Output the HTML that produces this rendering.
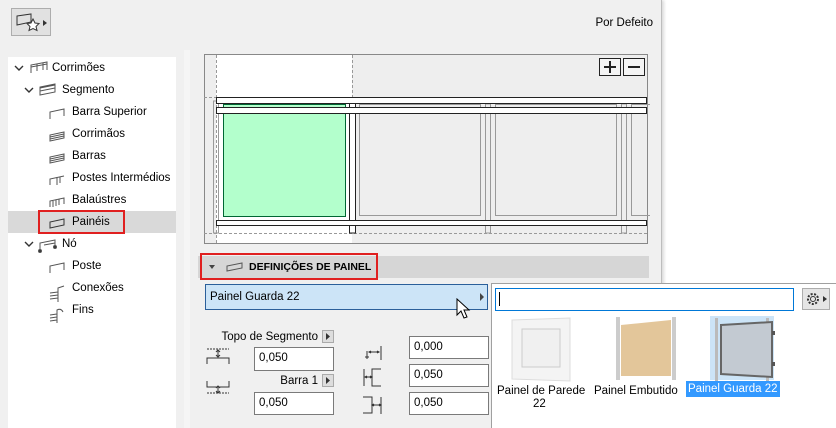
<!DOCTYPE html><html><head><style>
*{margin:0;padding:0;box-sizing:border-box}
body{width:836px;height:428px;position:relative;background:#fff;font-family:"Liberation Sans",sans-serif;font-size:11.5px;color:#000;overflow:hidden}
.a{position:absolute}
.t{position:absolute;white-space:nowrap;font-size:11.5px;line-height:14px}
.in{position:absolute;background:#fff;border:1px solid #7a7a7a;font-size:11.5px;padding:4px 0 0 4px}
</style></head><body>
<div class="a" style="left:0;top:0;width:662px;height:428px;background:#f0f0f0;border-right:1px solid #bdbdbd;box-shadow:2px 0 3px rgba(0,0,0,.15)"></div>
<div class="a" style="left:11px;top:8px;width:40px;height:28px;background:#e1e1e1;border:1px solid #adadad"></div>
<svg class="a" style="left:14px;top:12px" width="36" height="22"><path d="M3 4 L17 2 L17 10 L3 13 Z" fill="none" stroke="#333"/><path d="M19 7 l2 4 4 .5 -3 3 1 4 -4-2 -4 2 1-4 -3-3 4-.5z" fill="#fff" stroke="#333"/><path d="M29 8 l4 3 -4 3z" fill="#333"/></svg>
<div class="t" style="right:183px;top:16px">Por Defeito</div>
<div class="a" style="left:8px;top:57px;width:168px;height:371px;background:#fff"></div>
<div class="a" style="left:184px;top:50px;width:6px;height:378px;background:#f5f5f5"></div>
<div class="a" style="left:8px;top:211px;width:168px;height:22px;background:#d9d9d9"></div>
<div class="a" style="left:38px;top:210px;width:87px;height:24px;border:2px solid #e02020"></div>
<svg class="a" style="left:0;top:57px" width="176" height="270" fill="none" stroke="#555">
<path d="M15 9l4 4 4-4M25 31l4 4 4-4M25 185l4 4 4-4" stroke="#333" stroke-width="1.4"/>
<path d="M31 16v-8l16-3v8M31 10l16-3M37 14v-7M43 13v-7"/>
<path d="M40 38v-8l15-3v8zM40 31l15-3M40 34l15-3"/>
<path d="M50 62v-7l14-3v7"/>
<path d="M50 84v-6l14-3v6zM50 80l14-3M50 82l14-3"/>
<path d="M50 106v-6l14-3v6zM50 102l14-3M50 104l14-3"/>
<path d="M50 128v-6l14-3M57 128v-8M60 126v-6"/>
<path d="M50 150v-6l14-3v6M53 150v-6M56 149v-6M59 148v-6"/>
<path d="M50 171v-6l14-3v6z" stroke="#333"/>
<path d="M40 194v-8l15-3v8M44 188l11-2" /><circle cx="40" cy="194" r="1.5" fill="#333"/><circle cx="55" cy="190" r="1.5" fill="#333"/>
<path d="M50 216v-7l14-3v7"/>
<path d="M50 236l8-1M50 239l8-1M50 242l8-1M58 245v-14l6-2"/>
<path d="M50 258l7-1M50 261l7-1M50 264l7-1M57 266v-13q4-2 6 2"/>
</svg>
<div class="t" style="left:52px;top:61px">Corrimões</div>
<div class="t" style="left:62px;top:83px">Segmento</div>
<div class="t" style="left:72px;top:105px">Barra Superior</div>
<div class="t" style="left:72px;top:127px">Corrimãos</div>
<div class="t" style="left:72px;top:149px">Barras</div>
<div class="t" style="left:72px;top:171px">Postes Intermédios</div>
<div class="t" style="left:72px;top:193px">Balaústres</div>
<div class="t" style="left:72px;top:215px">Painéis</div>
<div class="t" style="left:62px;top:237px">Nó</div>
<div class="t" style="left:72px;top:259px">Poste</div>
<div class="t" style="left:72px;top:281px">Conexões</div>
<div class="t" style="left:72px;top:303px">Fins</div>
<svg class="a" style="left:204px;top:54px" width="446" height="192">
<rect x="0.5" y="0.5" width="443" height="189" fill="#eee" stroke="#888"/>
<rect x="12" y="1" width="136" height="188" fill="#fff"/>
<path d="M12.5 1v188M148.5 1v64M0 43.5h12M0 179.5h443" stroke="#999" stroke-dasharray="3 2"/>
<g fill="none" stroke="#999">
<rect x="155.5" y="50.5" width="121" height="111"/><rect x="291.5" y="50.5" width="121" height="111"/><rect x="427.5" y="50.5" width="20" height="111"/>
<rect x="9.5" y="47" width="5" height="132"/><rect x="281.5" y="50" width="5" height="129"/><rect x="417.5" y="50" width="5" height="129"/>
</g>
<rect x="19.5" y="50.5" width="122" height="112" fill="#b3ffcc" stroke="#063"/>
<rect x="145.5" y="49" width="6" height="130" fill="#fff" stroke="#222"/>
<g fill="#fff" stroke="#222"><rect x="12.5" y="43.5" width="430" height="6"/><rect x="12.5" y="53.5" width="430" height="6"/><rect x="12.5" y="166.5" width="430" height="5"/></g>
<g fill="#f4f4f4" stroke="#222"><rect x="395.5" y="4.5" width="21" height="17"/><rect x="419.5" y="4.5" width="21" height="17"/></g>
<path d="M400 13h12M406 7v12M424 13h12" stroke="#222" stroke-width="2"/>
</svg>
<div class="a" style="left:198px;top:256px;width:451px;height:22px;background:#d6d6d6"></div>
<div class="a" style="left:200px;top:253px;width:178px;height:27px;border:2px solid #e02020"></div>
<svg class="a" style="left:206px;top:259px" width="40" height="16"><path d="M3 6l3 4 3-4z" fill="#444"/><path d="M21 12v-5l15-3v5z" fill="none" stroke="#555"/></svg>
<div class="t" style="left:249px;top:260px;font-weight:bold;font-size:10.5px">DEFINIÇÕES DE PAINEL</div>
<div class="a" style="left:205px;top:284px;width:283px;height:26px;background:#cce4f7;border:1px solid #2b5f9a"></div>
<div class="t" style="left:210px;top:290px">Painel Guarda 22</div>
<svg class="a" style="left:478px;top:290px" width="10" height="14"><path d="M2 3l4 4-4 4z" fill="#444"/></svg>
<svg class="a" style="left:456px;top:298px" width="16" height="22"><path d="M1 1v16l4-4 3 7 3-1-3-7h5z" fill="#fff" stroke="#000"/></svg>
<div class="t" style="right:518px;top:330px">Topo de Segmento</div>
<div class="t" style="right:518px;top:374px">Barra 1</div>
<div class="a" style="left:322px;top:330px;width:12px;height:13px;background:#ddd;border:1px solid #aaa"></div>
<div class="a" style="left:322px;top:374px;width:12px;height:13px;background:#ddd;border:1px solid #aaa"></div>
<svg class="a" style="left:322px;top:330px" width="12" height="60"><path d="M4 3l4 3.5-4 3.5zM4 47l4 3.5-4 3.5z" fill="#333"/></svg>
<div class="in" style="left:254px;top:347px;width:80px;height:24px">0,050</div>
<div class="in" style="left:254px;top:392px;width:80px;height:23px">0,050</div>
<div class="in" style="left:409px;top:336px;width:80px;height:23px">0,000</div>
<div class="in" style="left:409px;top:364px;width:80px;height:23px">0,050</div>
<div class="in" style="left:409px;top:392px;width:80px;height:23px">0,050</div>
<svg class="a" style="left:205px;top:345px" width="190" height="75" fill="none" stroke="#333">
<path d="M2 4h22M2 48h22" stroke-dasharray="2 1"/>
<path d="M2 19v-6h22v6M2 36v6h22v-6M13 5v7M13 41v7M11 7l2-2 2 2M11 10l2 2 2-2M11 43l2-2 2 2M11 46l2 2 2-2"/>
<path d="M176 1v14M164 7h10M166 6l-2 1 2 1M172 6l2 1-2 1M162 6v8M160 12l4 0"/>
<path d="M176 24h-9v17h9M159 24v17" /><path d="M160 32h7M162 31l-2 1 2 1M165 31l2 1-2 1"/>
<path d="M158 52h9v16h-9M176 52v17"/><path d="M167 60h9M169 59l-2 1 2 1M174 59l2 1-2 1"/>
</svg>
<div class="a" style="left:491px;top:283px;width:345px;height:145px;background:#fff;border:1px solid #a0a0a0;border-right:none;border-bottom:none"></div>
<div class="a" style="left:495px;top:288px;width:299px;height:23px;border:1px solid #0078d7;background:#fff"></div>
<div class="a" style="left:499px;top:292px;width:1px;height:14px;background:#000"></div>
<div class="a" style="left:802px;top:288px;width:28px;height:22px;background:#e5e5e5;border:1px solid #adadad"></div>
<svg class="a" style="left:804px;top:290px" width="26" height="18"><circle cx="9" cy="9" r="5" fill="none" stroke="#333" stroke-width="2" stroke-dasharray="2 1.5"/><circle cx="9" cy="9" r="2.5" fill="none" stroke="#333"/><path d="M19 6l4 3-4 3z" fill="#333"/></svg>
<svg class="a" style="left:508px;top:315px" width="270" height="70">
<path d="M4 5l58-2v63l-58-2z" fill="#f4f4f4" stroke="#ddd"/><rect x="14" y="14" width="38" height="38" fill="#f0f0f0" stroke="#ccc"/>
<rect x="108" y="2" width="4" height="63" fill="#ccc"/><rect x="164" y="2" width="4" height="63" fill="#ccc"/>
<path d="M113 10l50-5v56l-50 0z" fill="#e3c69a"/>
<rect x="202" y="1" width="64" height="64" fill="#cce4f7"/>
<rect x="207" y="3" width="3" height="63" fill="#bbb"/><rect x="258" y="3" width="3" height="63" fill="#bbb"/>
<path d="M213 10l51-3v55l-51-3z" fill="#c3cad2" stroke="#666" stroke-width="2"/>
<rect x="264" y="16" width="3" height="4" fill="#555"/><rect x="264" y="47" width="3" height="4" fill="#555"/>
</svg>
<div class="t" style="left:497px;top:384px">Painel de Parede</div>
<div class="t" style="left:533px;top:397px">22</div>
<div class="t" style="left:594px;top:384px">Painel Embutido</div>
<div class="t" style="left:686px;top:381px;background:#3399ff;color:#fff;padding:1px 2px">Painel Guarda 22</div>
</body></html>
